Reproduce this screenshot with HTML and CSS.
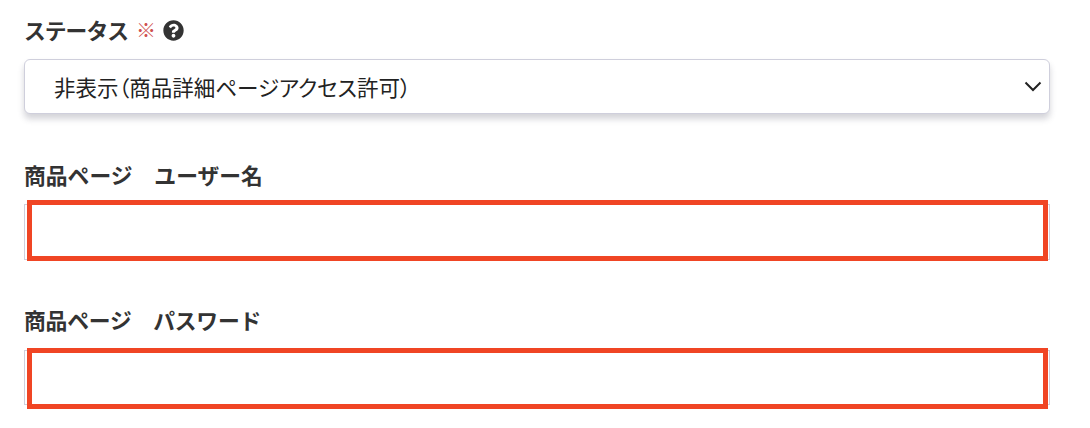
FILE: index.html
```html
<!DOCTYPE html>
<html lang="ja">
<head>
    <meta charset="UTF-8">
    <title>商品ページ設定</title>
    <link rel="stylesheet" href="styles.css">
</head>

<body>
    <div class="field field-status">
        <div class="field-label">
            <span class="status-title">ステータス</span>
            <span class="required">※</span>
            <svg class="help-icon" viewBox="0 0 512 512"><path d="M504 256c0 136.997-111.043 248-248 248S8 392.997 8 256C8 119.083 119.043 8 256 8s248 111.083 248 248zM262.655 90c-54.497 0-89.255 22.957-116.549 63.758-3.536 5.286-2.353 12.415 2.715 16.258l34.699 26.31c5.205 3.947 12.621 3.008 16.665-2.122 17.864-22.658 30.113-35.797 57.303-35.797 20.429 0 45.698 13.148 45.698 32.958 0 14.976-12.363 22.667-32.534 33.976C247.128 238.528 216 254.941 216 296v4c0 6.627 5.373 12 12 12h56c6.627 0 12-5.373 12-12v-1.333c0-28.462 83.186-29.647 83.186-106.667 0-58.002-60.165-102-116.531-102zM256 338c-25.365 0-46 20.635-46 46 0 25.364 20.635 46 46 46s46-20.636 46-46c0-25.365-20.635-46-46-46z"/></svg>
        </div>
        <div class="select-box">
            <span class="select-value">非表示（商品詳細ページアクセス許可）</span>
            <svg class="chevron" viewBox="0 0 18 11"><path d="M1.5 1.5 9 9l7.5-7.5"/></svg>
        </div>
    </div>

    <div class="field field-user">
        <div class="field-label">商品ページ　ユーザー名</div>
        <div class="text-input"><div class="highlight"></div></div>
    </div>

    <div class="field field-pass">
        <div class="field-label">商品ページ　パスワード</div>
        <div class="text-input"><div class="highlight"></div></div>
    </div>
</body>
</html>
```

FILE: styles.css
```css
body {
    font-family: "Noto Sans CJK JP", "Noto Sans", sans-serif;
    background: #fff;
    color: #333;
    margin: 0;
    padding: 15px 40px 23px 24px;
}

.field-label {
    display: flex;
    align-items: center;
    height: 30px;
    font-size: 21.8px;
    font-weight: 700;
    line-height: 30px;
}

.field-status {
    margin-bottom: 46px;
}

.field-user {
    margin-bottom: 45px;
}

.field-pass .field-label {
    letter-spacing: -0.2px;
}

.status-title {
    letter-spacing: -1px;
}

.required {
    margin-left: 8px;
    color: #cf5150;
    font-size: 20px;
    font-weight: 300;
}

.help-icon {
    width: 21px;
    height: 21px;
    margin-left: 7px;
    fill: #333;
}

.select-box {
    display: flex;
    align-items: center;
    justify-content: space-between;
    box-sizing: border-box;
    height: 55px;
    margin-top: 14px;
    padding: 0 7px 0 29px;
    background: #fff;
    border: 1px solid #cfcfdc;
    border-radius: 6px;
    box-shadow: 0 5px 6px rgba(60, 60, 80, 0.22);
}

.select-value {
    font-size: 21.5px;
    color: #222;
    font-feature-settings: "palt";
}

.chevron {
    width: 18px;
    height: 11px;
    fill: none;
    stroke: #222;
    stroke-width: 2;
}

.text-input {
    position: relative;
    box-sizing: border-box;
    height: 56px;
    margin-top: 14px;
    border: 1px solid #cfcfdc;
}

.field-pass .text-input {
    height: 55px;
    margin-top: 15px;
}

/* red annotation drawn over the input */
.highlight {
    position: absolute;
    top: -5px;
    left: 2px;
    right: 1px;
    bottom: -2px;
    border: 5px solid #f04524;
}

.field-pass .highlight {
    top: -3px;
    bottom: -5px;
}
```
